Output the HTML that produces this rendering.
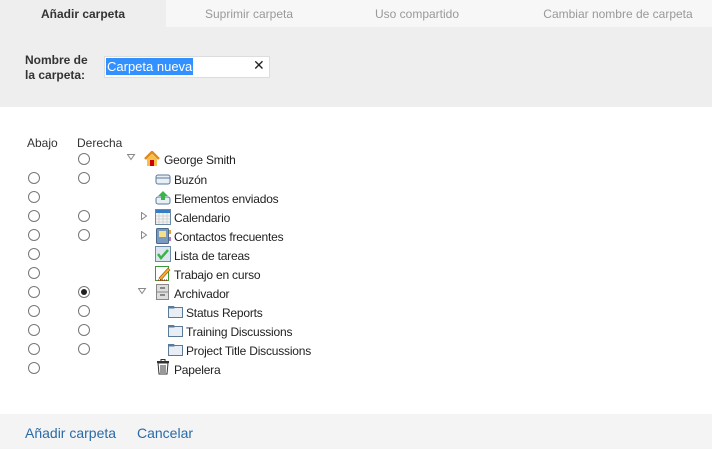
<!DOCTYPE html>
<html><head><meta charset="utf-8"><style>
body{margin:0;width:712px;height:451px;position:relative;overflow:hidden;background:#fff;font-family:"Liberation Sans",sans-serif;font-size:12px;color:#333}
.a{position:absolute;white-space:nowrap}
.tab{position:absolute;top:0;height:27px;line-height:29px;text-align:center;color:#999;background:#f7f7f7}
.r{position:absolute;width:10px;height:10px;border:1px solid #777;border-radius:50%;background:#fff}
.r.c::after{content:"";position:absolute;left:2px;top:2px;width:6px;height:6px;border-radius:50%;background:#222}
.t{position:absolute;font-size:12px;color:#222;letter-spacing:-0.2px}
svg{position:absolute}
</style></head><body>
<div class="tab" style="left:0;width:166px;background:#eee;color:#333;font-weight:bold">Añadir carpeta</div>
<div class="tab" style="left:166px;width:166px">Suprimir carpeta</div>
<div class="tab" style="left:332px;width:170px">Uso compartido</div>
<div class="tab" style="left:502px;width:210px;padding-left:22px;box-sizing:border-box">Cambiar nombre de carpeta</div>
<div class="a" style="left:0;top:27px;width:712px;height:80px;background:#eee"></div>
<div class="a" style="left:25px;top:53px;font-weight:bold;line-height:15px;color:#333">Nombre de<br>la carpeta:</div>
<div class="a" style="left:104px;top:56px;width:164px;height:20px;background:#fff;border:1px solid #ddd"></div>
<div class="a" style="left:106px;top:58px;height:17px;line-height:17px;background:#3390ff;color:#fff;font-size:13px;padding:0 1px">Carpeta nueva</div>
<div class="a" style="left:253px;top:57px;font-size:14px;color:#222">✕</div>

<div class="a" style="left:27px;top:136px">Abajo</div>
<div class="a" style="left:77px;top:136px">Derecha</div>

<div class="r" style="left:78px;top:153px"></div>
<div class="r" style="left:28px;top:172px"></div><div class="r" style="left:78px;top:172px"></div>
<div class="r" style="left:28px;top:191px"></div>
<div class="r" style="left:28px;top:210px"></div><div class="r" style="left:78px;top:210px"></div>
<div class="r" style="left:28px;top:229px"></div><div class="r" style="left:78px;top:229px"></div>
<div class="r" style="left:28px;top:248px"></div>
<div class="r" style="left:28px;top:267px"></div>
<div class="r" style="left:28px;top:286px"></div><div class="r c" style="left:78px;top:286px"></div>
<div class="r" style="left:28px;top:305px"></div><div class="r" style="left:78px;top:305px"></div>
<div class="r" style="left:28px;top:324px"></div><div class="r" style="left:78px;top:324px"></div>
<div class="r" style="left:28px;top:343px"></div><div class="r" style="left:78px;top:343px"></div>
<div class="r" style="left:28px;top:362px"></div>

<svg style="left:127px;top:154px" width="9" height="7"><path d="M0.5 0.5h7l-3.5 5z" fill="#fff" stroke="#888"/></svg>
<svg style="left:141px;top:212px" width="7" height="9"><path d="M0.5 0.5v7l5-3.5z" fill="#fff" stroke="#888"/></svg>
<svg style="left:141px;top:231px" width="7" height="9"><path d="M0.5 0.5v7l5-3.5z" fill="#fff" stroke="#888"/></svg>
<svg style="left:138px;top:288px" width="9" height="7"><path d="M0.5 0.5h7l-3.5 5z" fill="#fff" stroke="#888"/></svg>

<svg style="left:144px;top:151px" width="16" height="16"><path d="M1 8L8 1L15 8" fill="none" stroke="#e08a1e" stroke-width="2.5"/><path d="M3 8v7h10V8L8 3z" fill="#f7c04a"/><rect x="6" y="9" width="4" height="6" fill="#c00"/></svg>
<div class="t" style="left:164px;top:153px">George Smith</div>

<svg style="left:155px;top:172px" width="16" height="14"><rect x="1" y="3" width="14" height="9" rx="2" fill="#e8f0f6" stroke="#5a7a9a"/><path d="M1 6h14" stroke="#5a7a9a"/></svg>
<div class="t" style="left:174px;top:173px">Buzón</div>
<svg style="left:155px;top:190px" width="16" height="15"><rect x="1" y="7" width="14" height="7" rx="2" fill="#e8f0f6" stroke="#5a7a9a"/><path d="M8 1l5 5h-3v4H6V6H3z" fill="#3bb54a"/></svg>
<div class="t" style="left:174px;top:192px">Elementos enviados</div>
<svg style="left:155px;top:209px" width="16" height="16"><rect x="0.5" y="0.5" width="15" height="15" fill="#f4f4f4" stroke="#6a8aa8"/><rect x="1" y="1" width="14" height="3" fill="#3a7cc4"/><path d="M1 7h14M1 10h14M1 13h14M4 4v11M8 4v11M12 4v11" stroke="#ccc" stroke-width="0.8"/></svg>
<div class="t" style="left:174px;top:211px">Calendario</div>
<svg style="left:155px;top:228px" width="16" height="16"><rect x="1.5" y="0.5" width="12" height="15" rx="1" fill="#7a9ac0" stroke="#4a6a8a"/><rect x="4" y="3" width="7" height="6" fill="#f7e08a"/><rect x="14" y="2" width="2" height="4" fill="#e8a030"/><rect x="14" y="9" width="2" height="4" fill="#c070c0"/></svg>
<div class="t" style="left:174px;top:230px">Contactos frecuentes</div>
<svg style="left:155px;top:246px" width="16" height="16"><rect x="0.5" y="0.5" width="15" height="15" fill="#dde6ee" stroke="#6a8aa8"/><path d="M3 8l3 4l7-8" fill="none" stroke="#3bb54a" stroke-width="2.5"/></svg>
<div class="t" style="left:174px;top:249px">Lista de tareas</div>
<svg style="left:155px;top:265px" width="16" height="16"><rect x="0.5" y="1.5" width="13" height="14" fill="#fff" stroke="#3a9a3a"/><path d="M4 13l9-10l2 2l-9 10z" fill="#f0b030" stroke="#a05010" stroke-width="0.6"/><path d="M3 15h10" stroke="#c00" stroke-dasharray="1 1"/></svg>
<div class="t" style="left:174px;top:268px">Trabajo en curso</div>
<svg style="left:155px;top:284px" width="16" height="16"><rect x="1.5" y="0.5" width="12" height="15" fill="#ddd" stroke="#888"/><path d="M1.5 8h12" stroke="#888"/><rect x="5" y="3" width="5" height="2" fill="#888"/><rect x="5" y="10" width="5" height="2" fill="#888"/></svg>
<div class="t" style="left:174px;top:287px">Archivador</div>
<svg style="left:168px;top:304px" width="16" height="14"><path d="M0.5 2.5h5l1 1h8v10H0.5z" fill="#e8eef4" stroke="#5a7a9a"/><path d="M0.5 3.5h6" stroke="#5a7a9a" stroke-width="2"/></svg>
<div class="t" style="left:186px;top:306px">Status Reports</div>
<svg style="left:168px;top:323px" width="16" height="14"><path d="M0.5 2.5h5l1 1h8v10H0.5z" fill="#e8eef4" stroke="#5a7a9a"/><path d="M0.5 3.5h6" stroke="#5a7a9a" stroke-width="2"/></svg>
<div class="t" style="left:186px;top:325px">Training Discussions</div>
<svg style="left:168px;top:342px" width="16" height="14"><path d="M0.5 2.5h5l1 1h8v10H0.5z" fill="#e8eef4" stroke="#5a7a9a"/><path d="M0.5 3.5h6" stroke="#5a7a9a" stroke-width="2"/></svg>
<div class="t" style="left:186px;top:344px">Project Title Discussions</div>
<svg style="left:156px;top:359px" width="14" height="16"><path d="M1 3h12" stroke="#333" stroke-width="2"/><rect x="5" y="0.5" width="4" height="2" fill="none" stroke="#333"/><path d="M2 4l1 11h8l1-11z" fill="#fff" stroke="#333"/><path d="M5 6v8M7 6v8M9 6v8" stroke="#333"/></svg>
<div class="t" style="left:174px;top:363px">Papelera</div>

<div class="a" style="left:0;top:414px;width:712px;height:35px;background:#f4f4f4"></div>
<div class="a" style="left:25px;top:425px;font-size:14px;color:#2a6aa8">Añadir carpeta</div>
<div class="a" style="left:137px;top:425px;font-size:14px;color:#2a6aa8">Cancelar</div>
</body></html>
